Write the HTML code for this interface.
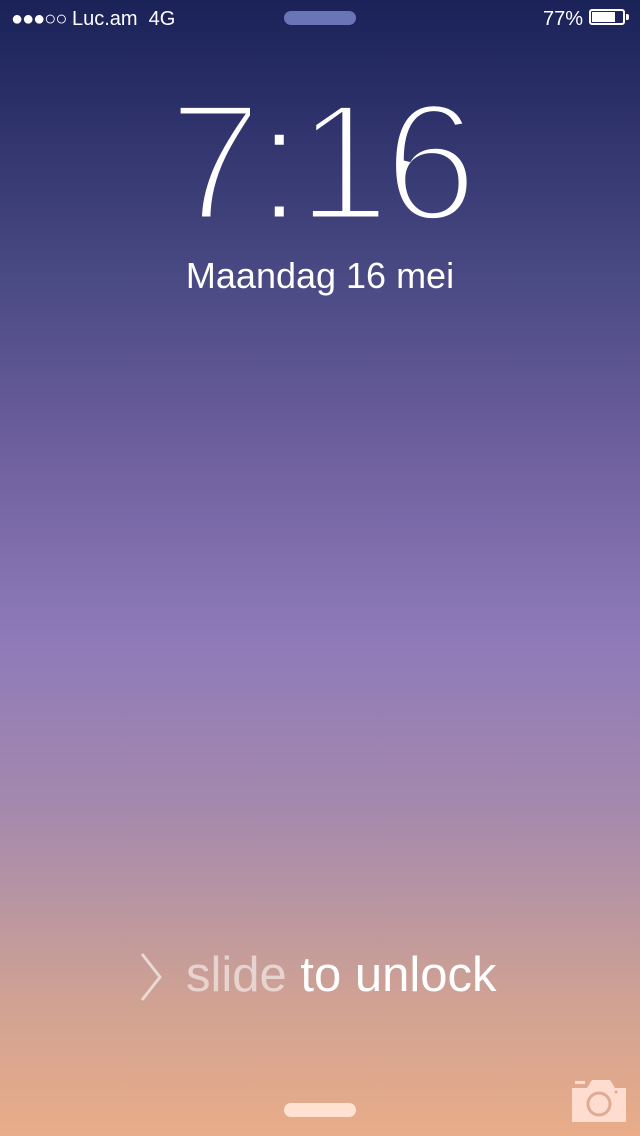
<!DOCTYPE html>
<html><head><meta charset="utf-8"><style>
html,body{margin:0;padding:0}
body{width:640px;height:1136px;overflow:hidden;position:relative;font-family:"Liberation Sans",sans-serif;color:#fff;
background:linear-gradient(180deg,#1a2258 0px,#2b2f68 100px,#4a4a84 280px,#6c5e9c 440px,#8f7ab9 640px,#a388ad 800px,#b895a2 900px,#d0a293 1000px,#e9ad89 1136px);}
.sb{position:absolute;top:8px;font-size:20px;line-height:22px}
.date{position:absolute;top:254px;left:0;width:640px;text-align:center;font-size:36px;line-height:44px}
.slide{position:absolute;top:946px;left:186px;font-size:49px;line-height:58px}
</style></head><body>
<div class="sb" style="left:11px"><span style="letter-spacing:-1px">●●●○○</span> Luc.am&nbsp; 4G</div>
<div style="position:absolute;left:284px;top:11px;width:72px;height:14px;border-radius:7px;background:#6a75b8"></div>
<div class="sb" style="left:543px">77%</div>
<div style="position:absolute;left:589px;top:9px;width:36px;height:16px;border:2px solid #fff;border-radius:3px;box-sizing:border-box"><div style="position:absolute;left:1px;top:1px;width:23px;height:10px;background:#fff"></div></div>
<div style="position:absolute;left:626px;top:14px;width:3px;height:6px;background:#fff;border-radius:0 2px 2px 0"></div>
<svg style="position:absolute;left:0;top:60px" width="640" height="180">
<defs><mask id="m" maskUnits="userSpaceOnUse" x="0" y="0" width="640" height="180">
<text x="320" y="160" text-anchor="middle" font-family="Liberation Sans" font-size="168" letter-spacing="-6" fill="#fff" stroke="#000" stroke-width="7">7:16</text>
</mask></defs>
<rect width="640" height="180" fill="#fff" mask="url(#m)"/>
</svg>
<div class="date">Maandag 16 mei</div>
<svg style="position:absolute;left:138px;top:952px" width="28" height="50"><path d="M4 2 L22 25 L4 48" stroke="rgba(255,255,255,0.6)" stroke-width="3" fill="none"/></svg>
<div class="slide"><span style="color:rgba(255,255,255,0.55)">slide</span> to unlock</div>
<div style="position:absolute;left:284px;top:1103px;width:72px;height:14px;border-radius:7px;background:#ffe2d2"></div>
<svg style="position:absolute;left:570px;top:1078px" width="58" height="44" viewBox="0 0 58 44">
<rect x="5" y="3" width="10" height="3" fill="#ffdcd0"/>
<path d="M2 10 H17 L22 2 H40 L45 10 H56 V44 H2 Z" fill="#ffdcd0"/>
<circle cx="29" cy="26" r="11" fill="none" stroke="#deab95" stroke-width="3"/>
<circle cx="46" cy="14" r="1.5" fill="#deab95"/>
</svg>
</body></html>
